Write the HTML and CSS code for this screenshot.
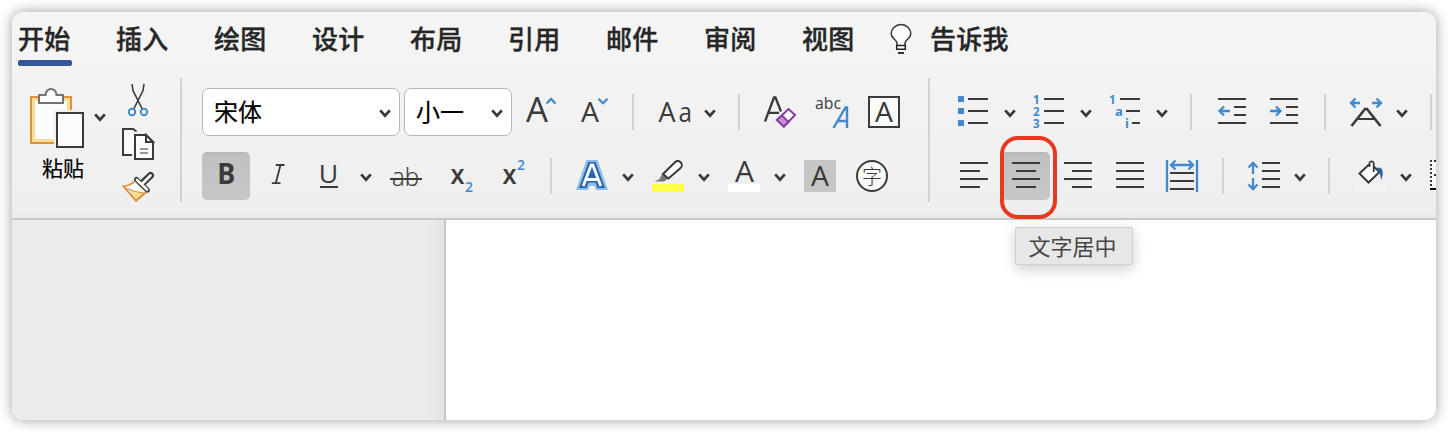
FILE: index.html
```html
<!DOCTYPE html>
<html lang="zh-CN">
<head>
<meta charset="utf-8">
<title>文档</title>
<link rel="stylesheet" href="styles.css">
</head>
<body>
<svg class="defs" width="0" height="0"><defs><path id="chev" d="M-4.8 -2.6L0 2.6L4.8 -2.6"/></defs></svg>
<main class="window">
  <header class="ribbon">
    <nav class="tabs">
      <a class="tab active">开始</a><a class="tab">插入</a><a class="tab">绘图</a><a class="tab">设计</a><a class="tab">布局</a><a class="tab">引用</a><a class="tab">邮件</a><a class="tab">审阅</a><a class="tab">视图</a>
      <a class="tab tell">
        <svg width="24" height="34" viewBox="889 21 24 34"><path d="M897 45.5V43C896.500 39.500 891.200 38.500 891.200 33.800A9.800 9.300 0 0 1 910.800 33.800C910.800 38.500 905.500 39.500 905 43V45.500" fill="#fcfcfc" stroke="#333" stroke-width="1.5"/><path d="M896.700 45.500H905.300V49.300H896.700Z" fill="#fff" stroke="#222" stroke-width="1.500"/><path d="M898 53H904" stroke="#333" stroke-width="1.800"/></svg>
        <span>告诉我</span>
      </a>
    </nav>
    <div class="toolbar">
      <section class="clipboard">
        <div class="paste">
          <svg width="84" height="66" viewBox="26 86 84 66">
            <path d="M33 99H69V141H33Z" fill="#fcfcfc" stroke="#f5dd96" stroke-width="4"/>
            <path d="M31 97H71V143H31Z" fill="none" stroke="#e08f40" stroke-width="2"/>
            <path d="M54 110H86V150H54Z" fill="#f1f1f1"/>
            <path d="M39 95H45.500A5.500 6 0 0 1 56.500 95H63V103H39Z" fill="#fcfcfc" stroke="#737373" stroke-width="2"/>
            <path d="M57 113H83V147H57Z" fill="#fcfcfc" stroke="#3a3a3a" stroke-width="2"/>
            <use href="#chev" x="100" y="117" class="chev"/>
          </svg>
          <span class="paste-label">粘贴</span>
        </div>
        <svg width="40" height="124" viewBox="118 80 40 124">
          <path d="M132 84L133 90.500L142.500 109.500M144 84L143 90.500L133.500 109.500" fill="none" stroke="#3a3a3a" stroke-width="1.600"/>
          <g fill="#fff" stroke="#4189cc" stroke-width="2"><circle cx="132" cy="112" r="3.200"/><circle cx="144" cy="112" r="3.200"/></g>
          <path d="M132 155H123V129H133L136 132" fill="#fcfcfc"/><path d="M132 155H123V129H133L136.500 131.500" fill="none" stroke="#3a3a3a" stroke-width="2"/>
          <path d="M135 135H146L153 142V159H135Z" fill="#fcfcfc" stroke="#3a3a3a" stroke-width="2"/><path d="M146 135V142H153Z" fill="#fcfcfc" stroke="#3a3a3a" stroke-width="2"/>
          <path d="M140 149H148M140 153H148" stroke="#777" stroke-width="1.600"/>
          <path d="M135 180.500Q130 186 123.500 186.300L136 201L146.500 192Z" fill="#fff" stroke="#e08f40" stroke-width="1.800"/>
          <path d="M129 190Q135 192.500 143.500 193.500L136 199.800Z" fill="#f5dd96"/><path d="M126 188.500Q135 192 145 193.300M130 193L136 200.500L144 193.500" fill="none" stroke="#e08f40" stroke-width="1.200"/>
          <path d="M136.500 179.500L147.500 190" stroke="#3a3a3a" stroke-width="5" stroke-linecap="round"/><path d="M142 183.500L150.500 175.500" stroke="#3a3a3a" stroke-width="7" stroke-linecap="round"/>
          <path d="M137 180L147 189.500M142.500 183.500L150.500 175.500" stroke="#fff" stroke-width="2.600" stroke-linecap="round"/>
        </svg>
      </section>
      <i class="divider"></i>
      <section class="group">
        <div class="row">
          <div class="select font-name"><span>宋体</span><svg width="14" height="12" viewBox="-7 -6 14 12"><use href="#chev" class="chev"/></svg></div>
          <div class="select font-size"><span>小一</span><svg width="14" height="12" viewBox="-7 -6 14 12"><use href="#chev" class="chev"/></svg></div>
          <svg class="btn" viewBox="516 88 48 48"><text x="526" y="121.500" font-size="34.500" textLength="22" lengthAdjust="spacingAndGlyphs" class="lt">A</text><path d="M546.500 103.500L551 99L555.500 103.500" class="blue"/></svg>
          <svg class="btn" viewBox="568 88 48 48"><text x="581" y="121.700" font-size="27" class="lt" textLength="18" lengthAdjust="spacingAndGlyphs">A</text><path d="M598.500 98.700L603 103.200L607.500 98.700" class="blue"/></svg>
          <i class="sep"></i>
          <svg class="btn wide" viewBox="650 88 72 48"><text x="658.500" y="121.700" font-size="27" class="lt">A</text><text x="678.500" y="121.700" font-size="27" class="lt" textLength="13.500" lengthAdjust="spacingAndGlyphs">a</text><use href="#chev" x="710" y="113" class="chev"/></svg>
          <i class="sep"></i>
          <svg class="btn" viewBox="756 88 48 48"><path d="M765 121.500L774 97.500H775.500L781 111.500M768.500 112.800H779" class="ink" style="stroke-width:2.300"/><path d="M788.500 109L795 115L784 126.500L777 120Z" fill="#fff" stroke="#893aa0" stroke-width="2"/><path d="M782 115.500L788.500 122L783.500 126.500L777 120Z" fill="#c990d5" stroke="#893aa0" stroke-width="1.800"/></svg>
          <svg class="btn" viewBox="808 88 48 48"><text x="815" y="109" font-size="16.500" textLength="26" lengthAdjust="spacingAndGlyphs" class="lt">abc</text><path d="M833.500 128L845.500 107.500H847V128M838.200 121H847" fill="none" stroke="#4189cc" stroke-width="2.400"/></svg>
          <svg class="btn" viewBox="860 88 48 48"><path d="M869 97H899V127H869Z" fill="#fafafa" stroke="#3a3a3a" stroke-width="2"/><text x="875" y="121.700" font-size="27" textLength="18" lengthAdjust="spacingAndGlyphs" class="lt">A</text></svg>
        </div>
        <div class="row">
          <svg class="btn on" viewBox="202 152 48 48"><text x="217.300" y="184" font-size="28" font-weight="700" textLength="18" lengthAdjust="spacingAndGlyphs" class="lt">B</text></svg>
          <svg class="btn" viewBox="254 152 48 48"><path d="M275.800 165H284.500M271.800 183.200H280.500M280.500 165L275.800 183" class="ink" style="stroke-width:1.800"/></svg>
          <svg class="btn wide" viewBox="306 152 72 48"><text x="318.800" y="182.500" font-size="26" class="lt" textLength="19.500" lengthAdjust="spacingAndGlyphs">U</text><path d="M320 187H338" class="ink"/><use href="#chev" x="366" y="177" class="chev"/></svg>
          <svg class="btn" viewBox="382 152 48 48"><text x="392" y="185.500" font-size="25" textLength="27" lengthAdjust="spacingAndGlyphs" class="thin">ab</text><path d="M390 179H422" class="ink"/></svg>
          <svg class="btn" viewBox="434 152 48 48"><text x="450.500" y="184" font-size="27" font-weight="600" class="lt" textLength="14" lengthAdjust="spacingAndGlyphs">x</text><text x="465" y="191.500" font-size="14.500" class="bl" textLength="8" lengthAdjust="spacingAndGlyphs">2</text></svg>
          <svg class="btn" viewBox="486 152 48 48"><text x="502.500" y="184" font-size="27" font-weight="600" class="lt" textLength="14" lengthAdjust="spacingAndGlyphs">x</text><text x="517" y="170" font-size="14.500" class="bl" textLength="8" lengthAdjust="spacingAndGlyphs">2</text></svg>
          <i class="sep"></i>
          <svg class="btn wide" viewBox="568 152 72 48"><path d="M576 190L586.500 160H597.500L608 190H596L594.500 186H589.500L588 190Z" fill="#8fbbe8"/><path d="M579 188L588.500 162H595.500L605 188H597.500L595.500 182.500H588.500L586.500 188Z" fill="#2864b0"/><path d="M583.200 186L591.200 165H592.800L600.800 186M586 179.500H598" fill="none" stroke="#fff" stroke-width="2.800"/><use href="#chev" x="628" y="177" class="chev"/></svg>
          <svg class="btn wide" viewBox="644 152 72 48"><path d="M652 184H684V192H652Z" fill="#ffff4a"/><path d="M662.500 173.500L659.500 179L654.500 181.500H664L670 177.500Z" fill="#777"/><path d="M663 174L675 162.200A4 4 0 0 1 680.800 167.700L668.500 178.500Z" fill="#fff" stroke="#3a3a3a" stroke-width="2"/><use href="#chev" x="704" y="177" class="chev"/></svg>
          <svg class="btn wide" viewBox="720 152 72 48"><path d="M728 184H760V192H728Z" fill="#fff"/><text x="735" y="181.700" font-size="29.500" class="lt" textLength="19" lengthAdjust="spacingAndGlyphs">A</text><use href="#chev" x="780" y="177" class="chev"/></svg>
          <svg class="btn" viewBox="796 152 48 48"><path d="M804 160H836V192H804Z" fill="#c8c6c4"/><text x="811" y="186" font-size="27" textLength="18" lengthAdjust="spacingAndGlyphs" class="lt">A</text></svg>
          <svg class="btn" viewBox="848 152 48 48"><circle cx="872" cy="176" r="15" fill="#fafafa" stroke="#3a3a3a" stroke-width="2"/><text x="862" y="183.500" font-size="20" class="cjk">字</text></svg>
        </div>
      </section>
      <i class="divider"></i>
      <section class="group">
        <div class="row">
          <svg class="btn wide" viewBox="950 88 72 48"><path d="M958 96h6v6h-6zM958 108h6v6h-6zM958 120h6v6h-6z" fill="#4189cc"/><path d="M968 99h20M968 111h20M968 123h20" class="ink"/><use href="#chev" x="1010" y="113" class="chev"/></svg>
          <svg class="btn wide" viewBox="1026 88 72 48"><g class="num"><text x="1033" y="104">1</text><text x="1033" y="116">2</text><text x="1033" y="128">3</text></g><path d="M1044 99h20M1044 111h20M1044 123h20" class="ink"/><use href="#chev" x="1086" y="113" class="chev"/></svg>
          <svg class="btn wide" viewBox="1102 88 72 48"><g class="num"><text x="1109" y="104">1</text><text x="1115" y="116" class="mid">a</text><text x="1125" y="128" class="mid">i</text></g><path d="M1120 99h20M1126 111h14M1132 123h8" class="ink"/><use href="#chev" x="1162" y="113" class="chev"/></svg>
          <i class="sep"></i>
          <svg class="btn" viewBox="1208 88 48 48"><path d="M1218 99h28M1234 107h12M1234 115h12M1218 123h28" class="ink"/><path d="M1230 111H1219.500M1224 106.500L1219.500 111L1224 115.500" class="blue"/></svg>
          <svg class="btn" viewBox="1260 88 48 48"><path d="M1270 99h28M1286 107h12M1286 115h12M1270 123h28" class="ink"/><path d="M1270 111H1280.500M1276 106.500L1280.500 111L1276 115.500" class="blue"/></svg>
          <i class="sep"></i>
          <svg class="btn wide" viewBox="1342 88 72 48"><path d="M1360 103H1351.500M1355.500 98.500L1351 103L1355.500 107.500M1372 103H1380.500M1376.500 98.500L1381 103L1376.500 107.500" class="blue"/><path d="M1351.500 126L1365 109H1367L1380.500 126" class="ink" style="stroke-width:2.600"/><path d="M1357 119H1375" class="ink" style="stroke-width:1.800"/><use href="#chev" x="1402" y="113" class="chev"/></svg>
          <i class="sep"></i>
        </div>
        <div class="row">
          <svg class="btn" viewBox="950 152 48 48"><path d="M960 163h28M960 171h20M960 179h28M960 187h20" class="ink"/></svg>
          <div class="marked"><svg class="btn on" viewBox="1002 152 48 48"><path d="M1012 163h28M1016 171h20M1012 179h28M1016 187h20" class="ink"/></svg><i class="ring"></i><span class="tooltip">文字居中</span></div>
          <svg class="btn" viewBox="1054 152 48 48"><path d="M1064 163h28M1072 171h20M1064 179h28M1072 187h20" class="ink"/></svg>
          <svg class="btn" viewBox="1106 152 48 48"><path d="M1116 163h28M1116 171h28M1116 179h28M1116 187h28" class="ink"/></svg>
          <svg class="btn" viewBox="1158 152 48 48"><path d="M1170 173h24M1170 181h24M1170 189h24" class="ink"/><path d="M1167 160V192M1197 160V192M1171.500 165H1192.500M1175.500 160.500L1171 165L1175.500 169.500M1188.500 160.500L1193 165L1188.500 169.500" class="blue"/></svg>
          <i class="sep"></i>
          <svg class="btn wide" viewBox="1240 152 72 48"><path d="M1262 163h18M1262 171h18M1262 179h18M1262 187h18" class="ink"/><path d="M1253 174V163.500M1248.500 167.500L1253 163L1257.500 167.500M1253 178V188.500M1248.500 184.500L1253 189L1257.500 184.500" class="blue"/><use href="#chev" x="1300" y="177" class="chev"/></svg>
          <i class="sep"></i>
          <svg class="btn wide" viewBox="1346 152 72 48"><path d="M1354 184H1386V192H1354Z" fill="#f2f2f2"/><path d="M1369 164.500L1359.500 173.500L1368.500 182.500L1379.500 172L1373.500 166.500" fill="#fff" stroke="#3a3a3a" stroke-width="2"/><path d="M1369.500 167V163A2.200 2.200 0 0 1 1373.700 163V172" fill="#fff" stroke="#3a3a3a" stroke-width="1.800"/><path d="M1376 168Q1383 166 1382.800 174L1381.300 180.500L1379.500 172Z" fill="#2864b0"/><use href="#chev" x="1406" y="177" class="chev"/></svg>
          <svg class="btn clipped" viewBox="1422 152 14 48"><path d="M1430 160H1436V190H1430Z" fill="#fafafa"/><path d="M1431 160V188M1434 161H1436M1434 175H1436" stroke="#333" stroke-width="2" stroke-dasharray="2 2"/><path d="M1430 189H1436" stroke="#000" stroke-width="2"/></svg>
        </div>
      </section>
    </div>
  </header>
  <div class="workspace"><aside class="margin"></aside><article class="page"></article></div>
</main>
</body>
</html>
```

FILE: styles.css
```css
* { box-sizing: border-box; }
body { margin: 0; padding: 12px; height: 432px; background: #fff; overflow: hidden; font-family: "Open Sans", "Noto Sans CJK SC", sans-serif; }
.defs { display: none; }
.window { width: 1424px; height: 408px; border-radius: 12px; overflow: hidden; background: #fff; box-shadow: 0 0 14px rgba(0, 0, 0, .38); }
.ribbon { height: 208px; background: linear-gradient(#f5f5f5, #efefef 95%, #e9e9e9); border-bottom: 2px solid #c8c8c8; }
.tabs { display: flex; height: 66px; padding-left: 6px; gap: 44px; font: 500 26px/51px "Noto Sans CJK SC", sans-serif; letter-spacing: .3px; color: #262626; -webkit-text-stroke: .35px #262626; }
.tab { width: 54px; height: 54px; flex: none; white-space: nowrap; }
.tab.active { background: radial-gradient(circle at 3px 51px, #345799 3px, transparent 3.5px), radial-gradient(circle at 51px 51px, #345799 3px, transparent 3.5px), linear-gradient(#345799, #345799) 3px 48px / 48px 6px no-repeat; }
.tab.tell { display: flex; gap: 17px; width: auto; margin-left: -11px; }
.tell svg { margin-top: 9px; }
.toolbar { display: flex; height: 124px; }
.clipboard { display: flex; width: 168px; padding: 2px 0 0 14px; flex: none; }
.paste { width: 92px; padding-top: 6px; }
.paste svg { display: block; }
.paste-label { display: block; margin-left: 16px; font: 21px/30px "Noto Sans CJK SC", sans-serif; color: #000; -webkit-text-stroke: .2px #000; }
.divider { width: 2px; height: 124px; background: #d2d2d2; flex: none; }
.group { padding: 10px 20px 0; display: flex; flex-direction: column; gap: 16px; flex: none; }
.row { display: flex; height: 48px; gap: 4px; align-items: center; }
.btn { width: 48px; height: 48px; display: block; flex: none; overflow: visible; }
.btn.wide { width: 72px; }
.btn.clipped { width: 14px; }
.btn.on { border-radius: 5px; background: linear-gradient(#b9b9b9, #c1c1c1 12%, #c7c7c7); }
.sep { width: 2px; height: 36px; margin: 0 12px; background: #d2d2d2; flex: none; }
.select { display: flex; align-items: center; justify-content: space-between; height: 48px; padding: 0 7px 0 11px; background: #fff; border: 1.500px solid #b8b8b8; border-radius: 7px; font: 24px/44px "Noto Sans CJK SC", sans-serif; color: #000; flex: none; }
.select span { margin-top: -2px; -webkit-text-stroke: .2px #000; }
.select svg { margin-top: 2px; }
.font-name { width: 198px; }
.font-size { width: 108px; }
.chev { fill: none; stroke: #3a3a3a; stroke-width: 2.800; }
.ink { fill: none; stroke: #3a3a3a; stroke-width: 2; }
.blue { fill: none; stroke: #4189cc; stroke-width: 2.300; }
.lt { fill: #3a3a3a; }
.thin { fill: #3a3a3a; font-weight: 300; stroke: #3a3a3a; stroke-width: .2; }
.bl { fill: #4189cc; font-weight: 600; }
.num { fill: #4189cc; font-family: "Noto Sans CJK SC", sans-serif; font-family: "Open Sans", sans-serif; font-size: 11.500px; font-weight: 700; }
.mid { font-size: 13px; font-weight: 700; }
.cjk { fill: #3a3a3a; font-family: "Noto Sans CJK SC", sans-serif; font-weight: 300; }
.marked { position: relative; width: 48px; height: 48px; flex: none; }
.ring { position: absolute; left: -2px; top: -16px; width: 57px; height: 83px; border: 4px solid #e73820; border-radius: 18px; }
.tooltip { position: absolute; left: 13px; top: 75px; width: 118px; height: 38px; padding-right: 3px; background: #e7e7e7; border: 1px solid #d0d0d0; border-radius: 2px; box-shadow: 0 4px 14px rgba(0, 0, 0, .2); font: 22px/34px "Noto Sans CJK SC", sans-serif; color: #464646; text-align: center; white-space: nowrap; }
.workspace { display: flex; height: 200px; }
.margin { width: 434px; background: linear-gradient(90deg, #ebebeb 96%, #e4e4e4); border-right: 2px solid #c6c6c6; }
.page { flex: 1; background: #fff; }
```
